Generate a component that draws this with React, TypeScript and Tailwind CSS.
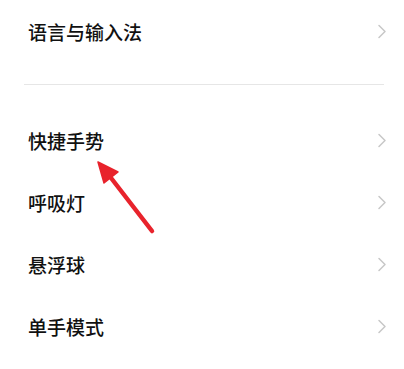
import React from 'react'

const rows = ['快捷手势', '呼吸灯', '悬浮球', '单手模式']

function Chevron() {
  return (
    <svg width="10" height="15" viewBox="0 0 10 15" fill="none">
      <path d="M2 1.5 L8 7.5 L2 13.5" stroke="#c7c7c7" strokeWidth="1.5" strokeLinecap="round" strokeLinejoin="round" />
    </svg>
  )
}

function Row({ label }: { label: string }) {
  return (
    <div className="flex h-[62px] items-center justify-between pl-[28px] pr-[17px]">
      <span className="text-[19px] font-medium leading-none text-[#111111]">{label}</span>
      <Chevron />
    </div>
  )
}

export default function App() {
  return (
    <div
      className="relative h-[369px] w-[404px] overflow-hidden bg-white"
      style={{ fontFamily: '"Noto Sans CJK SC", "Noto Sans", sans-serif' }}
    >
      <Row label="语言与输入法" />
      <div className="ml-[24px] mr-[20px] mt-[22px] mb-[24px] h-px bg-[#e6e6e6]" />
      <div className="flex flex-col">
        {rows.map((r) => (
          <Row key={r} label={r} />
        ))}
      </div>

      {/* red annotation arrow */}
      <svg className="absolute left-0 top-0" width="404" height="369" viewBox="0 0 404 369">
        <line x1="152" y1="231" x2="108" y2="174" stroke="#e8232c" strokeWidth="4.5" strokeLinecap="round" />
        <polygon points="98,162 118,172 104,183" fill="#e8232c" stroke="#e8232c" strokeWidth="1.5" strokeLinejoin="round" />
      </svg>
    </div>
  )
}
